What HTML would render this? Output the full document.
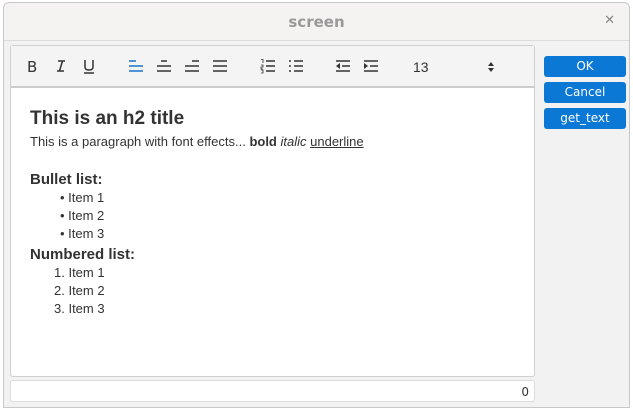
<!DOCTYPE html>
<html><head><style>
*{margin:0;padding:0;box-sizing:border-box}
body{width:633px;height:410px;background:#fff;font-family:"Liberation Sans",sans-serif;position:relative;overflow:hidden}
.win{position:absolute;left:3px;top:2px;width:627px;height:406px;border:1px solid #c8c8c8;border-radius:6px 6px 0 0;background:#f2f2f2}
.title{position:absolute;left:0;top:0;width:100%;height:38px;border-bottom:1px solid #dcdcdc;background:#f4f3f2;border-radius:6px 6px 0 0}
.title span{position:absolute;left:0;right:0;top:10px;text-align:center;font-family:"DejaVu Sans",sans-serif;font-weight:bold;font-size:15px;color:#999}
.x{position:absolute;right:14px;top:10px;font-family:"DejaVu Sans";font-size:13px;color:#888;font-weight:bold}
.ed{position:absolute;left:10px;top:45px;width:525px;height:332px;border:1px solid #d0d0d0;border-radius:3px;background:#fff}
.tb{position:absolute;left:0;top:0;width:100%;height:42px;background:#f4f4f4;border-bottom:2px solid #ccc}
.tb svg{position:absolute;top:12px}
.t{position:absolute;color:#333;white-space:nowrap}
.status{position:absolute;left:10px;top:380px;width:525px;height:22px;border:1px solid #ddd;border-radius:3px;background:#fff;font-family:"DejaVu Sans";font-size:12px;color:#333;text-align:right;padding:4px 5px 0 0}
.btn{position:absolute;left:544px;width:82px;height:21px;background:#0c78d6;border-radius:3px;color:#fff;font-family:"DejaVu Sans",sans-serif;font-size:12px;text-align:center;line-height:21px}
</style></head><body>
<div class="win">
<div class="title"><span>screen</span><div class="x">✕</div></div>
</div>
<div class="ed">
<div class="tb">
<svg style="left:14px" width="16" height="16" viewBox="0 0 16 16"><text x="2" y="14" font-family="DejaVu Sans" font-size="15" fill="#333">B</text></svg>
<svg style="left:42px" width="16" height="16" viewBox="0 0 16 16"><path d="M5 3H12M4 13H11M9.5 3L6.5 13" stroke="#333" stroke-width="1.5" fill="none"/></svg>
<svg style="left:70px" width="16" height="16" viewBox="0 0 16 16"><path d="M4 2V9Q4 12 8 12Q12 12 12 9V2M3 15H13" stroke="#333" stroke-width="1.5" fill="none"/></svg>
<svg style="left:117px" width="16" height="16" viewBox="0 0 16 16"><path d="M1 3H8M1 8H15M1 13H15" stroke="#1a72c9" stroke-width="1.6" fill="none"/></svg>
<svg style="left:145px" width="16" height="16" viewBox="0 0 16 16"><path d="M5 3H11M1 8H15M1 13H15" stroke="#333" stroke-width="1.6" fill="none"/></svg>
<svg style="left:173px" width="16" height="16" viewBox="0 0 16 16"><path d="M8 3H15M1 8H15M1 13H15" stroke="#333" stroke-width="1.6" fill="none"/></svg>
<svg style="left:201px" width="16" height="16" viewBox="0 0 16 16"><path d="M1 3H15M1 8H15M1 13H15" stroke="#333" stroke-width="1.6" fill="none"/></svg>
<svg style="left:249px" width="16" height="16" viewBox="0 0 16 16"><path d="M6 3H15M6 8H15M6 13H15" stroke="#333" stroke-width="1.6" fill="none"/><path d="M1 1.5H3V5M1 7H3V9H1V11H3M1 12H3V15H1" stroke="#333" stroke-width=".8" fill="none"/></svg>
<svg style="left:277px" width="16" height="16" viewBox="0 0 16 16"><path d="M6 3H15M6 8H15M6 13H15M1 3H3M1 8H3M1 13H3" stroke="#333" stroke-width="1.6" fill="none"/></svg>
<svg style="left:324px" width="16" height="16" viewBox="0 0 16 16"><path d="M1 3H15M7 8H15M1 13H15" stroke="#333" stroke-width="1.6" fill="none"/><path d="M5 5V11L1 8Z" fill="#333"/></svg>
<svg style="left:352px" width="16" height="16" viewBox="0 0 16 16"><path d="M1 3H15M7 8H15M1 13H15" stroke="#333" stroke-width="1.6" fill="none"/><path d="M1 5V11L5 8Z" fill="#333"/></svg>
<div class="t" style="left:402px;top:13px;font-size:14px">13</div>
<svg style="left:475px;top:14px" width="10" height="14" viewBox="0 0 10 14"><path d="M2 6L5 2L8 6ZM2 8L5 12L8 8Z" fill="#333"/></svg>
</div>
<div class="t" style="left:19px;top:62px;font-size:19px;font-weight:bold">This is an h2 title</div>
<div class="t" style="left:19px;top:88px;font-size:13px">This is a paragraph with font effects... <b>bold</b> <i>italic</i> <u>underline</u></div>
<div class="t" style="left:19px;top:125px;font-size:15px;font-weight:bold">Bullet list:</div>
<div class="t" style="left:49px;top:144px;font-size:13px">• Item 1</div>
<div class="t" style="left:49px;top:162px;font-size:13px">• Item 2</div>
<div class="t" style="left:49px;top:180px;font-size:13px">• Item 3</div>
<div class="t" style="left:19px;top:200px;font-size:15px;font-weight:bold">Numbered list:</div>
<div class="t" style="left:43px;top:219px;font-size:13px">1. Item 1</div>
<div class="t" style="left:43px;top:237px;font-size:13px">2. Item 2</div>
<div class="t" style="left:43px;top:255px;font-size:13px">3. Item 3</div>
</div>
<div class="status">0</div>
<div class="btn" style="top:56px">OK</div>
<div class="btn" style="top:82px">Cancel</div>
<div class="btn" style="top:108px">get_text</div>
</body></html>
